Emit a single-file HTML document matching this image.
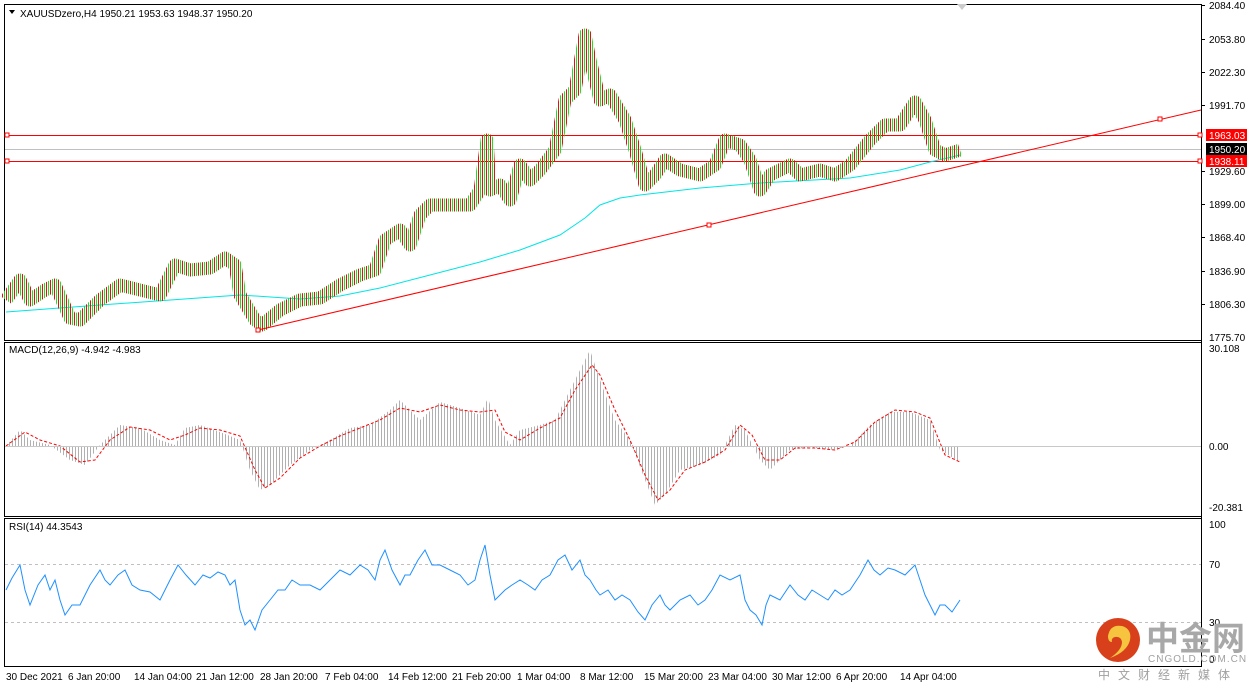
<!DOCTYPE html>
<html><head><meta charset="utf-8"><style>
html,body{margin:0;padding:0;background:#fff;width:1252px;height:690px;overflow:hidden;font-family:"Liberation Sans",Tahoma,sans-serif}
svg text{font-family:"Liberation Sans",sans-serif;font-size:10px}
</style></head><body>
<svg width="1252" height="690" viewBox="0 0 1252 690" xmlns="http://www.w3.org/2000/svg">
<defs>
<pattern id="bars" x="0" y="0" width="4" height="10" patternUnits="userSpaceOnUse">
<rect x="0" y="0" width="1" height="10" fill="#22dd22"/><rect x="2" y="0" width="1" height="10" fill="#dd1111"/>
</pattern>
<pattern id="hist" width="3" height="10" patternUnits="userSpaceOnUse">
<rect x="0" y="0" width="1" height="10" fill="#b0b0b0"/>
</pattern>
</defs>
<rect width="1252" height="690" fill="#fff"/>
<rect x="4.5" y="4.5" width="1197" height="336" fill="none" stroke="#000"/>
<rect x="4.5" y="342.5" width="1197" height="174" fill="none" stroke="#000"/>
<rect x="4.5" y="518.5" width="1197" height="148" fill="none" stroke="#000"/>
<line x1="1201.5" y1="4" x2="1201.5" y2="667" stroke="#000"/>
<path d="M957 4 L967 4 L962 10 Z" fill="#ccc"/>
<line x1="5" y1="149.5" x2="1201" y2="149.5" stroke="#c0c0c0"/>
<line x1="5" y1="135.5" x2="1201" y2="135.5" stroke="#f00"/>
<line x1="5" y1="161.5" x2="1201" y2="161.5" stroke="#f00"/>
<rect x="5" y="133" width="4" height="4" fill="#fff" stroke="#f00"/>
<rect x="1198" y="133" width="4" height="4" fill="#fff" stroke="#f00"/>
<rect x="5" y="159" width="4" height="4" fill="#fff" stroke="#f00"/>
<rect x="1198" y="159" width="4" height="4" fill="#fff" stroke="#f00"/>
<polyline fill="none" stroke="#00e5e5" stroke-width="1" points="6,312 100,305 240,295 300,299 340,296 380,288 430,275 480,262 520,250 560,235 585,218 600,205 620,198 640,195 700,188 760,183 850,178 900,170 930,162 960,155"/>
<polyline fill="none" stroke="url(#bars)" stroke-width="13" stroke-linejoin="round" points="6,300 20,280 30,300 45,290 55,285 70,318 80,320 100,300 120,285 140,290 160,295 175,265 190,270 210,268 225,258 235,265 240,295 255,320 262,325 280,310 300,300 320,298 340,285 360,275 375,270 385,240 400,230 410,245 420,215 430,205 450,205 470,205 480,190 487,140 490,190 500,185 510,200 520,165 530,180 540,170 555,150 565,100 575,90 585,35 590,60 600,100 610,95 625,120 635,150 645,185 655,175 665,160 680,170 700,175 715,165 725,140 740,145 750,160 760,190 770,175 790,165 800,175 820,170 835,175 850,165 870,140 885,125 900,125 915,102 925,120 935,150 945,155 960,150"/>
<line x1="258" y1="330" x2="1201" y2="110" stroke="#f00"/>
<rect x="256" y="328" width="4" height="4" fill="#fff" stroke="#f00"/>
<rect x="707" y="223" width="4" height="4" fill="#fff" stroke="#f00"/>
<rect x="1158" y="117" width="4" height="4" fill="#fff" stroke="#f00"/>
<text x="20" y="17">XAUUSDzero,H4  1950.21 1953.63 1948.37 1950.20</text>
<path d="M9 10 L15 10 L12 14 Z" fill="#000"/>
<g>
<text x="1209" y="9">2084.40</text><text x="1209" y="43">2053.80</text><text x="1209" y="76">2022.30</text>
<text x="1209" y="109">1991.70</text><text x="1209" y="175">1929.60</text><text x="1209" y="208">1899.00</text>
<text x="1209" y="241">1868.40</text><text x="1209" y="275">1836.90</text><text x="1209" y="308">1806.30</text><text x="1209" y="341">1775.70</text>
</g>
<g stroke="#000"><line x1="1201" y1="5.5" x2="1205" y2="5.5"/><line x1="1201" y1="39.5" x2="1205" y2="39.5"/><line x1="1201" y1="72.5" x2="1205" y2="72.5"/><line x1="1201" y1="105.5" x2="1205" y2="105.5"/><line x1="1201" y1="171.5" x2="1205" y2="171.5"/><line x1="1201" y1="204.5" x2="1205" y2="204.5"/><line x1="1201" y1="237.5" x2="1205" y2="237.5"/><line x1="1201" y1="271.5" x2="1205" y2="271.5"/><line x1="1201" y1="304.5" x2="1205" y2="304.5"/></g>
<rect x="1206" y="129" width="41" height="12" fill="#f00"/><text x="1209" y="139" fill="#fff">1963.03</text>
<rect x="1206" y="143" width="41" height="12" fill="#000"/><text x="1209" y="153" fill="#fff">1950.20</text>
<rect x="1206" y="155" width="41" height="12" fill="#f00"/><text x="1209" y="165" fill="#fff">1938.11</text>
<polygon fill="url(#hist)" points="6,446 20,430 30,440 50,445 70,460 85,465 100,445 120,425 140,428 160,440 175,445 185,428 200,425 220,432 240,440 250,470 260,490 270,485 290,465 310,450 330,440 350,428 370,425 390,410 400,400 420,420 440,402 460,408 480,415 488,398 495,420 510,445 520,430 540,425 555,420 570,390 585,360 590,350 600,380 615,420 630,440 645,480 655,505 665,495 680,470 700,465 720,455 735,425 745,430 760,460 770,470 790,450 810,447 830,450 850,446 870,425 890,412 910,412 930,420 940,450 960,462 960,446"/>
<polyline fill="none" stroke="#f00" stroke-dasharray="3,2" points="6,446 25,432 40,440 60,446 80,462 95,460 110,440 130,427 150,430 170,440 185,435 200,428 220,430 240,436 255,470 265,488 280,478 300,458 320,446 340,436 360,428 380,420 400,408 420,412 440,405 460,410 480,412 495,410 505,432 520,440 540,428 560,418 575,390 592,365 600,375 615,410 630,440 645,475 658,500 670,490 685,470 705,462 725,450 740,425 752,435 765,460 780,460 795,448 815,448 835,450 855,442 875,422 895,410 915,412 930,418 945,455 960,462"/>
<line x1="5" y1="446.5" x2="1201" y2="446.5" stroke="#c8c8c8"/>
<text x="9" y="353">MACD(12,26,9) -4.942 -4.983</text>
<text x="1209" y="352">30.108</text><text x="1209" y="450">0.00</text><text x="1209" y="511">-20.381</text>
<line x1="5" y1="564.5" x2="1201" y2="564.5" stroke="#c0c0c0" stroke-dasharray="3,3"/>
<line x1="5" y1="622.5" x2="1201" y2="622.5" stroke="#c0c0c0" stroke-dasharray="3,3"/>
<polyline fill="none" stroke="#1e90ff" points="6,590 12,578 20,565 25,590 30,605 38,585 45,575 50,590 55,580 60,600 65,615 72,605 80,605 90,585 100,570 105,580 110,585 118,575 125,570 132,585 140,590 150,592 160,600 170,580 178,565 186,575 195,585 203,575 210,578 218,572 225,575 230,585 235,580 240,610 245,625 250,620 255,630 262,610 270,600 278,590 285,590 292,580 300,585 310,585 320,590 330,580 340,570 350,575 360,565 368,570 375,580 380,560 385,550 392,570 400,585 405,575 410,575 418,560 425,550 432,565 440,565 450,570 460,575 468,585 475,580 480,560 485,545 490,575 495,600 500,595 505,590 512,585 520,580 528,585 535,590 542,580 550,575 558,560 565,555 572,570 580,560 585,575 590,580 596,590 600,595 608,590 615,600 622,595 630,600 638,612 645,620 652,605 660,595 665,605 670,610 680,600 690,595 698,605 705,600 712,590 720,575 730,580 740,575 745,600 750,610 756,615 762,625 766,605 770,595 780,600 790,585 798,595 805,600 812,590 820,595 828,600 835,590 842,595 850,590 860,575 868,560 874,570 880,575 888,568 895,570 905,575 915,565 920,580 925,595 930,605 935,615 940,605 945,605 952,612 960,600"/>
<text x="9" y="530">RSI(14) 44.3543</text>
<text x="1209" y="528">100</text><text x="1209" y="568">70</text><text x="1209" y="626">30</text><text x="1209" y="663">0</text>
<g><text x="6" y="680">30 Dec 2021</text><text x="68" y="680">6 Jan 20:00</text><text x="134" y="680">14 Jan 04:00</text><text x="196" y="680">21 Jan 12:00</text><text x="260" y="680">28 Jan 20:00</text><text x="325" y="680">7 Feb 04:00</text><text x="388" y="680">14 Feb 12:00</text><text x="452" y="680">21 Feb 20:00</text><text x="517" y="680">1 Mar 04:00</text><text x="580" y="680">8 Mar 12:00</text><text x="644" y="680">15 Mar 20:00</text><text x="708" y="680">23 Mar 04:00</text><text x="772" y="680">30 Mar 12:00</text><text x="836" y="680">6 Apr 20:00</text><text x="900" y="680">14 Apr 04:00</text></g>
<circle cx="1118" cy="640" r="22" fill="#d8401c"/>
<path d="M1108 636 q2 -12 14 -10 q10 3 8 14 q-3 12 -20 18 q12 -8 12 -16 q-1 -6 -7 -5 q-4 1 -3 5 q-4 0 -4 -6z" fill="#f7c440"/>
<text x="1146" y="650" style="font-size:33px;font-family:'Noto Sans CJK SC',sans-serif;font-weight:bold" fill="#a8a8a8">中金网</text>
<text x="1148" y="662" style="font-size:10px;letter-spacing:1px" fill="#a0a0a0">CNGOLD.COM.CN</text>
<text x="1098" y="679" style="font-size:12px;letter-spacing:8px;font-family:'Noto Sans CJK SC',sans-serif" fill="#a0a0a0">中文财经新媒体</text>
</svg>
</body></html>
